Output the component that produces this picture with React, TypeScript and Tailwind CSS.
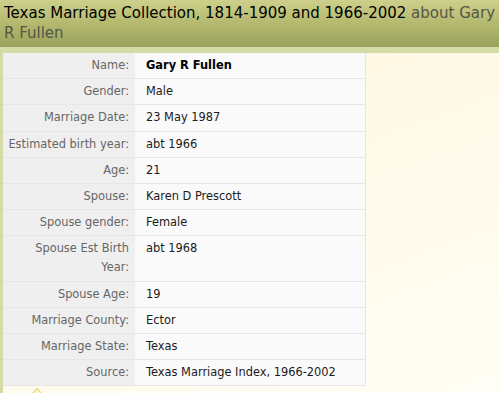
import React from "react";

const rows: [string, string, boolean?][] = [
  ["Name:", "Gary R Fullen", true],
  ["Gender:", "Male"],
  ["Marriage Date:", "23 May 1987"],
  ["Estimated birth year:", "abt 1966"],
  ["Age:", "21"],
  ["Spouse:", "Karen D Prescott"],
  ["Spouse gender:", "Female"],
  ["Spouse Est Birth Year:", "abt 1968"],
  ["Spouse Age:", "19"],
  ["Marriage County:", "Ector"],
  ["Marriage State:", "Texas"],
  ["Source:", "Texas Marriage Index, 1966-2002"],
];

export default function App() {
  return (
    <div
      className="w-[499px] h-[393px] overflow-hidden bg-[linear-gradient(160deg,#fdf5dc_0%,#fffaeb_60%,#fffdf5_100%)]"
      style={{ fontFamily: "Tahoma, 'DejaVu Sans', Verdana, sans-serif" }}
    >
      <div className="h-[47px] bg-[linear-gradient(180deg,#cdd08a_0%,#b4b96f_50%,#9aa15b_100%)] px-[4px] pt-[3px] text-[15px] leading-[20px] text-black">
        Texas Marriage Collection, 1814-1909 and 1966-2002{" "}
        <span className="text-[#555548]">about Gary R Fullen</span>
      </div>
      <div className="h-[6px] bg-[#d5dba6]" />
      <div className="flex">
        <div className="w-[3px] h-[340px] bg-[#d5dba6]" />
        <div className="relative">
          <table className="w-[363px] border-collapse text-[11.4px] leading-[19px]">
            <tbody>
              {rows.map(([label, value, bold], i) => (
                <tr key={i} className="border-b border-[#e6e6e6]">
                  <td className="w-[132px] bg-[#efefef] text-right text-[#666] pl-[4px] pr-[6px] pt-[3.1px] pb-[3.1px] align-top">
                    {label}
                  </td>
                  <td
                    className={`bg-[#fafafa] text-[#1a1a1a] pl-[11px] pr-[6px] pt-[3.1px] pb-[3.1px] align-top border-r border-[#e6e6e6] ${
                      bold ? "font-bold text-black" : ""
                    }`}
                  >
                    {value}
                  </td>
                </tr>
              ))}
            </tbody>
          </table>
          <svg className="absolute left-[26px] top-[334px]" width="16" height="10" viewBox="0 0 16 10">
            <path d="M1 9 L8 1.5 L15 9" fill="#fff8c8" stroke="#e8d890" strokeWidth="1.2" />
          </svg>
        </div>
      </div>
    </div>
  );
}
